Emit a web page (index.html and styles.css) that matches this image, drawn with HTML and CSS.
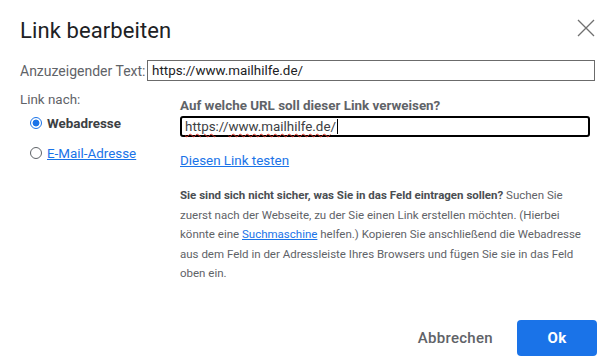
FILE: index.html
```html
<!DOCTYPE html>
<html lang="de">
<head>
<meta charset="utf-8">
<link rel="stylesheet" href="styles.css">
</head>
<body>
<div class="dialog">
  <h1 class="title">Link bearbeiten</h1>
  <button class="close" aria-label="Schließen">
    <svg width="18" height="18" viewBox="0 0 18 18"><path d="M1 1 L17 17 M17 1 L1 17" stroke="#707070" stroke-width="1.3" fill="none"/></svg>
  </button>
  <div class="row-text">
    <label class="lbl first-lbl">Anzuzeigender Text:</label>
    <div class="input plain">https://www.mailhilfe.de/</div>
  </div>
  <div class="main">
    <div class="left">
      <div class="lbl linknach">Link nach:</div>
      <div class="radio-row first"><span class="radio on"></span><span class="rtext bold">Webadresse</span></div>
      <div class="radio-row"><span class="radio"></span><a class="rtext link">E-Mail-Adresse</a></div>
    </div>
    <div class="right">
      <div class="question">Auf welche URL soll dieser Link verweisen?</div>
      <div class="input focus"><span class="spell">https</span>://<span class="spell">www.mailhilfe.de</span>/<span class="caret"></span></div>
      <a class="link test">Diesen Link testen</a>
      <p class="help"><b>Sie sind sich nicht sicher, was Sie in das Feld eintragen sollen?</b> Suchen Sie zuerst nach der Webseite, zu der Sie einen Link erstellen möchten. (Hierbei könnte eine <a class="link">Suchmaschine</a> helfen.) Kopieren Sie anschließend die Webadresse aus dem Feld in der Adressleiste Ihres Browsers und fügen Sie sie in das Feld oben ein.</p>
    </div>
  </div>
  <div class="footer">
    <button class="btn cancel">Abbrechen</button>
    <button class="btn ok">Ok</button>
  </div>
</div>
</body>
</html>
```
FILE: styles.css
```css
html, body { margin: 0; padding: 0; background: #fff; }
body { font-family: Roboto, "Liberation Sans", sans-serif; color: #202124; width: 605px; height: 360px; overflow: hidden; }
.dialog { position: relative; padding: 0 8px 0 20px; }
.title { margin: 0; padding-top: 16px; font-size: 22px; font-weight: 400; line-height: 30px; color: #202124; letter-spacing: 0.1px; }
.close { position: absolute; top: 19px; left: 577px; width: 18px; height: 18px; padding: 0; border: 0; background: none; }
.close svg { display: block; }
.lbl { font-size: 13.4px; color: #5f6368; }
.row-text { display: flex; align-items: center; margin-top: 14px; }
.first-lbl { width: 127px; font-size: 14px; white-space: nowrap; }
.input { box-sizing: border-box; font-size: 13.4px; color: #202124; display: flex; align-items: center; }
.input.plain { width: 448px; height: 21px; border: 1px solid #6b6b6b; padding-left: 4px; }
.main { display: flex; margin-top: 11px; }
.left { width: 160px; }
.linknach { line-height: 16px; }
.radio-row { display: flex; align-items: center; margin-left: 10px; height: 18px; }
.radio-row.first { margin-top: 6px; margin-bottom: 12px; }
.radio { box-sizing: border-box; width: 12px; height: 12px; border-radius: 50%; border: 1px solid #5f6368; margin-right: 5px; flex: none; }
.radio.on { border: 1.5px solid #1a73e8; background: radial-gradient(circle, #1a73e8 0 3.2px, #fff 3.7px); }
.rtext { font-size: 13.4px; }
.bold { font-weight: 700; color: #3c4043; }
.link { color: #1a73e8; text-decoration: underline; cursor: pointer; }
.right { width: 410px; padding-top: 6px; }
.question { font-size: 13.4px; font-weight: 700; color: #5f6368; line-height: 16px; }
.input.focus { width: 410px; height: 21px; border: 2px solid #000; border-radius: 3px; margin-top: 2px; padding-left: 3px; color: #3c4043; }
.spell { text-decoration: underline wavy #d93025; text-decoration-thickness: 1px; text-underline-offset: 2px; }
.caret { display: inline-block; width: 1px; height: 15px; background: #000; margin-left: 1px; }
.test { display: block; font-size: 13.4px; margin-top: 16px; line-height: 16px; }
.help { margin: 17px 0 0 0; font-size: 11.5px; line-height: 19.5px; color: #5f6368; width: 410px; }
.help b { color: #4a4e52; }
.footer { display: flex; justify-content: flex-end; align-items: center; gap: 12px; margin-top: 36px; }
.btn { font-family: Roboto, "Liberation Sans", sans-serif; font-size: 15px; font-weight: 500; border: 0; border-radius: 4px; height: 36px; cursor: pointer; letter-spacing: 0.3px; }
.cancel { background: none; color: #5f6368; padding: 0 12px; }
.ok { background: #1a73e8; color: #fff; width: 80px; font-weight: 700; }
```
